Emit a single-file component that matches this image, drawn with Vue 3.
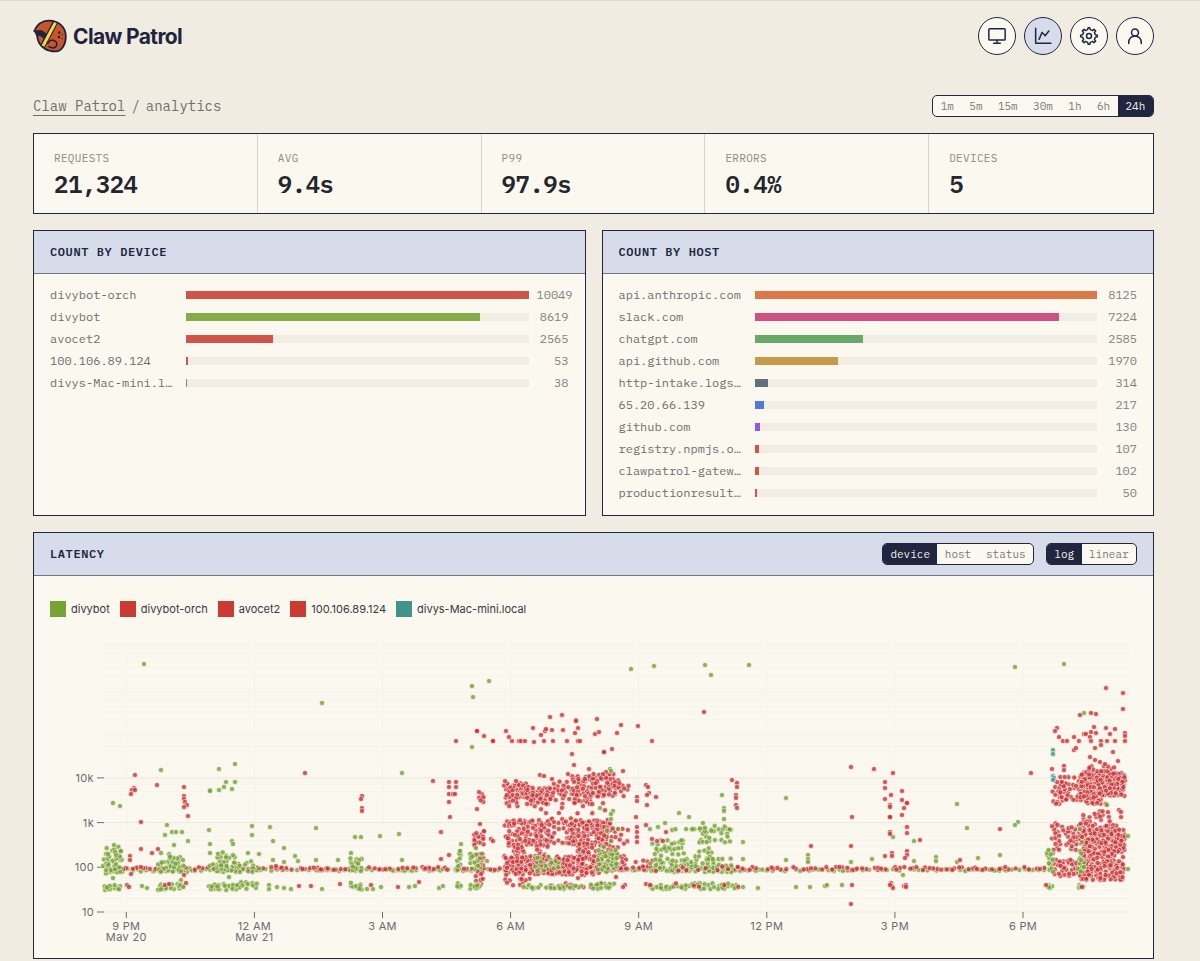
<template>
  <div class="page">
    <header class="topbar">
      <a href="#" class="brand">
        <svg class="logo" viewBox="0 0 34 34" aria-hidden="true">
          <path class="shell" d="M1.2 12C4 5.500 9 1.800 15.500 1.600 25.500 1.400 32.800 8 32.800 17.500 32.800 26 28.500 32 23 32.400 14 32.600 7 28 5 21 4 17 4 13.500 1.200 12Z" />
          <path class="claw" d="M0.800 12.300C6 9.500 12 11 14.500 16.500L12 21.500 10.800 20C9.500 18 7.500 16.500 5.500 17 4 15.500 3.500 13 0.800 12.300Z" />
          <path class="strap-edge" d="M22.800 2.500 9.500 27.500" />
          <path class="strap" d="M22.400 3.600 10 27" />
          <path class="curl" d="M14.500 25C16 21.800 18.500 20.800 21 21.600 24 22.600 24.500 25.500 23 27.500 21.500 29.300 18 28.800 15.500 27.500" />
          <circle cx="26.300" cy="13.500" r="1.200" />
          <circle cx="29.300" cy="15.500" r="0.700" />
          <circle cx="26" cy="18" r="1.300" />
          <circle cx="29.300" cy="19.500" r="0.700" />
        </svg>
        <span class="brand-name">Claw Patrol</span>
      </a>
      <nav class="nav">
        <button
          v-for="item in navItems"
          :key="item.label"
          type="button"
          class="nav-button"
          :class="{ active: item.active }"
          :aria-label="item.label"
        >
          <svg viewBox="0 0 24 24" aria-hidden="true">
            <path v-for="d in item.paths" :key="d" :d="d" />
          </svg>
        </button>
      </nav>
    </header>

    <div class="subbar">
      <div class="crumbs">
        <a href="#">Claw Patrol</a>
        <span>/</span>
        <span>analytics</span>
      </div>
      <div class="segmented ranges">
        <button
          v-for="r in ranges"
          :key="r"
          type="button"
          :class="{ active: r === range }"
          @click="range = r"
        >{{ r }}</button>
      </div>
    </div>

    <section class="stats">
      <div v-for="stat in stats" :key="stat.label" class="stat">
        <div class="stat-label">{{ stat.label }}</div>
        <div class="stat-value">{{ stat.value }}</div>
      </div>
    </section>

    <div class="counts">
      <section v-for="panel in countPanels" :key="panel.title" class="panel">
        <div class="panel-head"><h2>{{ panel.title }}</h2></div>
        <div class="rows">
          <div v-for="row in panel.rows" :key="row.name" class="row">
            <span class="row-name">{{ row.name }}</span>
            <div class="track">
              <div class="fill" :style="{ width: barWidth(row, panel), background: row.color }"></div>
            </div>
            <span class="row-value">{{ row.count }}</span>
          </div>
        </div>
      </section>
    </div>

    <section class="panel">
      <div class="panel-head">
        <h2>LATENCY</h2>
        <div class="controls">
          <div class="segmented group-by">
            <button
              v-for="g in groupings"
              :key="g"
              type="button"
              :class="{ active: g === grouping }"
              @click="grouping = g"
            >{{ g }}</button>
          </div>
          <div class="segmented scale">
            <button
              v-for="s in scales"
              :key="s"
              type="button"
              :class="{ active: s === scale }"
              @click="scale = s"
            >{{ s }}</button>
          </div>
        </div>
      </div>
      <div class="latency">
        <ul class="legend">
          <li v-for="entry in legend" :key="entry.name">
            <span class="swatch" :class="entry.tone"></span>{{ entry.name }}
          </li>
        </ul>
        <svg class="chart" viewBox="50 620 1087 321" role="img" aria-label="Latency by device">
          <g class="grid">
            <line v-for="y in minorLines" :key="y" x1="104" x2="1129" :y1="y" :y2="y" />
            <line v-for="t in xTicks" :key="t.x" :x1="t.x" :x2="t.x" y1="642" y2="912" />
            <line v-for="t in yTicks" :key="t.y" class="major" x1="104" x2="1129" :y1="t.y" :y2="t.y" />
          </g>
          <g class="y-axis">
            <g v-for="t in yTicks" :key="t.label">
              <line x1="97" x2="104" :y1="t.y" :y2="t.y" />
              <text x="94" :y="t.y + 4">{{ t.label }}</text>
            </g>
          </g>
          <g class="x-axis">
            <g v-for="t in xTicks" :key="t.label">
              <line :x1="t.x" :x2="t.x" y1="912" y2="918" />
              <text :x="t.x" y="930">{{ t.label }}</text>
              <text v-if="t.day" :x="t.x" y="941">{{ t.day }}</text>
            </g>
          </g>
          <g class="dots">
            <circle v-for="(p, i) in points" :key="i" :class="p.tone" :cx="p.x" :cy="p.y" r="2.6" />
          </g>
        </svg>
      </div>
    </section>
  </div>
</template>

<script setup>
import { ref } from "vue";

const ranges = ["1m", "5m", "15m", "30m", "1h", "6h", "24h"];
const range = ref("24h");
const groupings = ["device", "host", "status"];
const grouping = ref("device");
const scales = ["log", "linear"];
const scale = ref("log");

const navItems = [
  {
    label: "Devices",
    paths: [
      "M3.500 3.200h17a1.300 1.300 0 0 1 1.300 1.300v11a1.300 1.300 0 0 1-1.300 1.300h-17a1.300 1.300 0 0 1-1.300-1.300v-11a1.300 1.300 0 0 1 1.300-1.300Z",
      "M12 17v3.800",
      "M8 20.800h8",
    ],
  },
  {
    label: "Analytics",
    active: true,
    paths: ["M3.200 2.800V20.800H21.500", "M7.300 16 10.800 7.800 14.700 11.600 19 6"],
  },
  {
    label: "Settings",
    paths: [
      "M12 15a3 3 0 1 0 0-6 3 3 0 0 0 0 6Z",
      "M19.6224 10.3954L18.5247 7.7448L20 6L18 4L16.2647 5.48295L13.5578 4.36974L12.9353 2H10.981L10.3491 4.40113L7.70441 5.51596L6 4L4 6L5.45337 7.78885L4.3725 10.4463L2 11V13L4.40111 13.6555L5.51575 16.2997L4 18L6 20L7.79116 18.5403L10.397 19.6123L11 22H13L13.6045 19.6132L16.2551 18.5155L18 20L20 18L18.5159 16.2494L19.6139 13.598L22 12.9772V11Z",
    ],
  },
  {
    label: "Account",
    paths: [
      "M4.500 21v-1.500a7.500 7.500 0 0 1 15 0v1.500",
      "M12 12a4.200 4.200 0 1 0 0-8.400 4.200 4.200 0 0 0 0 8.400Z",
    ],
  },
];

const stats = [
  { label: "REQUESTS", value: "21,324" },
  { label: "AVG", value: "9.4s" },
  { label: "P99", value: "97.9s" },
  { label: "ERRORS", value: "0.4%" },
  { label: "DEVICES", value: "5" },
];

const countPanels = [
  {
    title: "COUNT BY DEVICE",
    rows: [
      { name: "divybot-orch", count: 10049, color: "#cf554b" },
      { name: "divybot", count: 8619, color: "#87ab4b" },
      { name: "avocet2", count: 2565, color: "#cf554b" },
      { name: "100.106.89.124", count: 53, color: "#cf554b" },
      { name: "divys-Mac-mini.local", count: 38, color: "#559a8a" },
    ],
  },
  {
    title: "COUNT BY HOST",
    rows: [
      { name: "api.anthropic.com", count: 8125, color: "#dc7748" },
      { name: "slack.com", count: 7224, color: "#cd5284" },
      { name: "chatgpt.com", count: 2585, color: "#68a968" },
      { name: "api.github.com", count: 1970, color: "#c69a4a" },
      { name: "http-intake.logs.datadoghq.com", count: 314, color: "#656e7b" },
      { name: "65.20.66.139", count: 217, color: "#5278e0" },
      { name: "github.com", count: 130, color: "#9656e0" },
      { name: "registry.npmjs.org", count: 107, color: "#cf554b" },
      { name: "clawpatrol-gateway.local", count: 102, color: "#cf554b" },
      { name: "productionresultssa.blob", count: 50, color: "#cd5270" },
    ],
  },
];

const barWidth = (row, panel) => `${(row.count / panel.rows[0].count) * 100}%`;

const legend = [
  { name: "divybot", tone: "green" },
  { name: "divybot-orch", tone: "red" },
  { name: "avocet2", tone: "red" },
  { name: "100.106.89.124", tone: "red" },
  { name: "divys-Mac-mini.local", tone: "teal" },
];

// Axes
const DECADE = 44.7;
const yAt = (ms) => 912 - (Math.log10(ms) - 1) * DECADE;

const yTicks = [
  { label: "10", y: yAt(10) },
  { label: "100", y: yAt(100) },
  { label: "1k", y: yAt(1000) },
  { label: "10k", y: yAt(10000) },
];

const minorLines = [];
for (let e = 1; e < 7; e++) {
  for (let k = 1; k < 10; k++) {
    minorLines.push(yAt(k * 10 ** e));
  }
}
minorLines.push(yAt(10 ** 7));

const xTicks = ["9 PM", "12 AM", "3 AM", "6 AM", "9 AM", "12 PM", "3 PM", "6 PM"].map((label, i) => ({
  label,
  x: 126.3 + i * 128.1,
  day: ["May 20", "May 21"][i],
}));

// Small seeded generator so that the dense bands are stable between renders
let seed = 20;
const random = () => {
  seed = (seed * 1664525 + 1013904223) % 4294967296;
  return seed / 4294967296;
};

// tone, x from, x to, y from, y to, count
const bands = [
  ["green", 104, 190, 868, 872, 28],
  ["red", 104, 190, 867, 869, 16],
  ["green", 190, 1050, 869, 871, 190],
  ["red", 190, 1050, 867, 870, 200],
  ["green", 103, 122, 857, 874, 26],
  ["green", 104, 121, 846, 858, 12],
  ["green", 103, 121, 885, 890, 13],
  ["green", 158, 184, 860, 872, 26],
  ["green", 169, 184, 854, 864, 12],
  ["green", 158, 184, 884, 890, 18],
  ["green", 208, 240, 863, 872, 24],
  ["green", 217, 236, 852, 866, 15],
  ["green", 208, 240, 884, 890, 24],
  ["green", 243, 260, 861, 872, 10],
  ["green", 241, 260, 882, 890, 9],
  ["green", 350, 362, 856, 872, 16],
  ["green", 350, 362, 882, 890, 9],
  ["green", 457, 461, 850, 871, 8],
  ["green", 457, 461, 882, 888, 4],
  ["red", 474, 484, 831, 846, 16],
  ["red", 475, 484, 853, 886, 22],
  ["red", 478, 484, 794, 802, 6],
  ["green", 470, 482, 853, 871, 16],
  ["green", 470, 481, 884, 889, 9],
  ["red", 504, 526, 783, 798, 40],
  ["red", 504, 518, 795, 808, 9],
  ["red", 526, 550, 787, 804, 44],
  ["red", 550, 572, 781, 800, 24],
  ["red", 571, 591, 776, 804, 44],
  ["red", 591, 616, 774, 797, 46],
  ["red", 614, 629, 780, 797, 12],
  ["red", 528, 605, 803, 814, 14],
  ["red", 504, 551, 820, 846, 88],
  ["red", 550, 571, 818, 843, 20],
  ["red", 569, 612, 820, 846, 98],
  ["red", 612, 628, 827, 860, 18],
  ["red", 511, 524, 844, 860, 18],
  ["red", 536, 550, 845, 860, 9],
  ["red", 576, 590, 843, 860, 18],
  ["red", 590, 614, 843, 860, 16],
  ["red", 504, 601, 856, 875, 180],
  ["red", 600, 628, 862, 871, 14],
  ["red", 504, 530, 878, 886, 10],
  ["red", 550, 602, 883, 888, 10],
  ["green", 535, 560, 856, 872, 16],
  ["green", 597, 617, 850, 872, 34],
  ["green", 521, 582, 885, 889, 24],
  ["green", 590, 615, 883, 889, 13],
  ["red", 634, 656, 860, 872, 10],
  ["green", 650, 732, 867, 872, 46],
  ["green", 650, 732, 858, 868, 46],
  ["green", 652, 684, 839, 856, 26],
  ["green", 695, 713, 848, 860, 10],
  ["green", 670, 732, 829, 830, 16],
  ["green", 699, 731, 825, 843, 24],
  ["green", 649, 690, 885, 889, 22],
  ["green", 690, 738, 883, 889, 24],
  ["red", 651, 740, 866, 871, 10],
  ["red", 666, 740, 882, 887, 5],
  ["red", 1052, 1066, 781, 804, 20],
  ["red", 1060, 1080, 776, 800, 26],
  ["red", 1080, 1125, 772, 796, 126],
  ["red", 1088, 1115, 766, 774, 14],
  ["red", 1080, 1106, 792, 805, 26],
  ["red", 1094, 1110, 811, 821, 10],
  ["red", 1080, 1090, 815, 823, 5],
  ["red", 1052, 1080, 823, 850, 40],
  ["red", 1080, 1117, 821, 830, 20],
  ["red", 1080, 1125, 829, 852, 112],
  ["red", 1083, 1115, 850, 862, 30],
  ["red", 1053, 1080, 859, 876, 36],
  ["red", 1080, 1125, 861, 880, 86],
  ["green", 1047, 1053, 850, 872, 14],
  ["green", 1048, 1053, 885, 889, 5],
  ["green", 1078, 1084, 851, 872, 12],
  ["green", 1078, 1084, 884, 889, 4],
];

// Isolated requests, as "x,y" pairs
const singles = {
  green: `144,664 322,703 161,770 219,769 235,764 226,782 235,782 210,790 210,791 219,790 224,787 232,789
    113,803 120,806 167,825 172,832 176,832 182,832 165,835 188,841 209,830 252,826 252,835 270,827
    273,841 316,828 284,848 232,841 233,844 210,844 174,845 355,837 361,837 380,836 399,834 402,773
    402,860 210,853 248,853 259,854 161,853 114,845 121,851 273,860 284,862 295,856 298,861 316,860
    338,860 351,853 113,878 229,877 181,880 142,886 147,888 269,885 269,889 277,887 284,888 291,889
    322,889 367,889 373,889 381,887 409,887 415,886 631,669 654,666 472,686 489,681 473,697 472,747
    610,769 611,771 600,808 613,811 611,814 611,819 618,829 461,844 460,851 476,848 607,831 611,841
    604,847 487,861 439,888 443,886 705,665 711,675 749,665 722,795 724,808 724,811 724,819 679,813
    689,817 665,823 650,829 658,827 703,823 786,798 743,842 743,859 786,860 808,855 808,859 808,862
    758,888 796,887 810,887 743,887 825,886 827,885 842,885 851,862 872,859 893,837 914,841 914,861
    903,875 1015,667 1064,664 1084,713 957,804 967,828 1018,822 1015,825 936,857 936,861 978,858
    1000,855 1128,836 1107,805 1128,869 957,862 1080,829 1082,842`,
  red: `135,775 157,785 184,787 134,788 132,790 135,790 131,794 184,796 184,799 185,802 187,805 184,807
    188,816 141,822 141,849 158,849 152,853 130,856 130,860 131,874 127,885 129,887 165,885 169,884
    186,883 184,875 305,773 362,796 361,799 362,808 362,811 299,886 311,886 340,884 371,885 398,887
    419,882 276,866 433,781 456,741 477,731 477,731 484,736 493,741 493,741 506,731 509,737 512,741
    519,741 521,741 525,741 533,728 534,742 541,735 544,741 545,731 546,729 552,730 550,717 553,741
    562,715 563,730 567,741 576,720 576,721 578,728 575,733 578,741 580,741 597,719 595,734 599,732
    621,725 617,733 638,726 652,741 612,749 604,752 604,752 572,754 574,765 589,769 623,771 606,772
    603,774 568,774 540,775 544,776 552,779 516,781 505,781 449,782 456,782 449,787 456,787 449,794
    453,794 455,794 449,802 450,817 441,832 449,855 441,859 479,792 477,809 480,824 484,831 491,839
    493,841 636,817 646,825 647,805 656,797 646,785 648,787 649,793 647,795 637,797 637,801 637,827
    637,832 637,837 637,842 652,839 657,841 666,832 663,841 625,885 623,887 646,884 650,885 616,877
    578,878 704,712 732,780 737,783 737,787 736,795 736,798 736,805 737,808 811,846 851,767 874,769
    893,773 885,782 885,788 885,799 891,795 890,805 890,807 890,817 890,817 890,832 890,834 902,791
    902,800 907,803 907,803 904,808 902,815 907,827 907,833 852,817 851,846 852,885 851,904 885,856
    892,853 892,856 907,851 907,855 905,858 920,840 891,883 892,886 893,888 890,885 904,886 906,885
    906,887 1106,688 1123,693 1123,709 1080,715 1091,713 1096,714 1057,728 1055,731 1059,737 1063,741
    1067,741 1074,737 1074,750 1076,748 1079,741 1084,734 1086,734 1091,732 1096,733 1094,727 1090,737
    1091,741 1106,728 1101,741 1101,745 1095,748 1107,741 1110,734 1115,729 1115,741 1125,733 1125,736
    1125,741 1113,752 1090,757 1095,760 1118,761 1100,762 1105,764 1031,773 1052,769 1064,766 1064,770
    1000,829 960,860 1123,857 1046,885 1082,887 1119,810 1121,812 1121,817`,
  teal: "1053,750 1053,754 1053,776 1054,778 1053,780",
};

// Pick the roomiest of a few candidates, so a band fills evenly instead of clumping
const scatter = ([tone, x0, x1, y0, y1, count]) => {
  const placed = [];
  for (let i = 0; i < count; i++) {
    let best = null;
    let bestGap = -1;
    for (let c = 0; c < 3; c++) {
      const p = { tone, x: x0 + random() * (x1 - x0), y: y0 + random() * (y1 - y0) };
      const gap = Math.min(99, ...placed.map((q) => Math.hypot(q.x - p.x, q.y - p.y)));
      if (gap > bestGap) {
        best = p;
        bestGap = gap;
      }
    }
    placed.push(best);
  }
  return placed;
};

const points = bands.flatMap(scatter);
for (const [tone, list] of Object.entries(singles)) {
  for (const pair of list.split(/\s+/)) {
    const [x, y] = pair.split(",").map(Number);
    points.push({ tone, x, y });
  }
}
</script>

<style>
body {
  margin: 0;
  background: #f0ece1;
}
</style>

<style scoped>
.page {
  padding: 16px 46px 2px 33px;
  border-top: 1px solid #dfdcd1;
  font-family: "IBM Plex Mono", "Liberation Mono", monospace;
  color: #20263f;
}

button {
  font: inherit;
  color: inherit;
  cursor: pointer;
}

.topbar {
  display: flex;
  align-items: center;
  justify-content: space-between;
  margin-bottom: 40px;
}

.brand {
  display: flex;
  align-items: center;
  gap: 6px;
  color: #1e2440;
  text-decoration: none;
}

.brand-name {
  padding-top: 2px;
  font-family: Inter, sans-serif;
  font-size: 21px;
  font-weight: 700;
  line-height: 28px;
  letter-spacing: -0.03em;
}

.logo {
  width: 34px;
  height: 34px;
  fill: #1e2440;
}

.shell {
  fill: #c9562b;
  stroke: #1e2440;
  stroke-width: 1.8;
  stroke-linejoin: round;
}

.strap-edge {
  stroke: #1e2440;
  stroke-width: 5.4;
}

.strap {
  stroke: #f3d94a;
  stroke-width: 3;
}

.curl {
  fill: none;
  stroke: #1e2440;
  stroke-width: 1.6;
}

.nav {
  display: flex;
  gap: 8px;
}

.nav-button {
  display: flex;
  align-items: center;
  justify-content: center;
  width: 38px;
  height: 38px;
  padding: 0;
  border: 1px solid #20263f;
  border-radius: 50%;
  background: #fbf8f0;
}

.nav-button.active {
  background: #d6dce9;
}

.nav-button svg {
  width: 20px;
  height: 20px;
  fill: none;
  stroke: #20263f;
  stroke-width: 1.8;
  stroke-linecap: round;
  stroke-linejoin: round;
}

.subbar {
  display: flex;
  align-items: center;
  justify-content: space-between;
  margin-bottom: 16px;
}

.crumbs {
  display: flex;
  gap: 6px;
  font-size: 14px;
  line-height: 22px;
  color: #6f6e6c;
}

.crumbs a {
  color: inherit;
  text-underline-offset: 4px;
}

.segmented {
  display: flex;
  box-sizing: border-box;
  height: 22px;
  overflow: hidden;
  border: 1px solid #20263f;
  border-radius: 5px;
  background: #fbf8f0;
  font-size: 11px;
  color: #7b7a78;
}

.segmented button {
  flex: 1 1 auto;
  padding: 0 7px;
  border: 0;
  background: none;
}

.segmented button.active {
  background: #20263f;
  color: #f3f0e8;
}

.ranges {
  min-width: 222px;
}

.group-by {
  min-width: 152px;
}

.scale {
  min-width: 91px;
}

.stats {
  display: grid;
  grid-template-columns: repeat(5, 1fr);
  margin-bottom: 16px;
  border: 1px solid #20263f;
  background: #fbf8f0;
}

.stat {
  padding: 15px 20px 14px;
  border-right: 1px solid #d9d4c4;
}

.stat:last-child {
  border-right: 0;
}

.stat-label {
  margin-bottom: 2px;
  font-size: 11px;
  line-height: 18px;
  letter-spacing: 0.03em;
  color: #8d8b87;
}

.stat-value {
  font-size: 24px;
  font-weight: 600;
  line-height: 30px;
  letter-spacing: -0.02em;
  color: #25262c;
}

.counts {
  display: grid;
  grid-template-columns: 1fr 1fr;
  gap: 16px;
  margin-bottom: 16px;
}

.panel {
  min-width: 0;
  border: 1px solid #20263f;
  background: #fbf8f0;
}

.panel-head {
  display: flex;
  align-items: center;
  justify-content: space-between;
  height: 42px;
  padding: 0 16px;
  border-bottom: 1px solid #6f7689;
  background: #d6dce9;
}

.panel-head h2 {
  margin: 0;
  font-size: 12px;
  font-weight: 600;
  line-height: 18px;
  letter-spacing: 0.05em;
}

.controls {
  display: flex;
  gap: 12px;
}

.rows {
  padding: 10px 16px 11px;
}

.row {
  display: grid;
  grid-template-columns: 128px 1fr 32px;
  align-items: center;
  gap: 8px;
  font-size: 12px;
  line-height: 22px;
  color: #6f6e6c;
}

.row-name {
  overflow: hidden;
  text-overflow: ellipsis;
  white-space: nowrap;
}

.track {
  height: 8px;
  background: #f1ede3;
}

.fill {
  height: 100%;
}

.row-value {
  text-align: right;
  color: #83817e;
}

.latency {
  padding: 25px 16px 17px;
}

.legend {
  display: flex;
  gap: 10px;
  margin: 0 0 3px;
  padding: 0;
  list-style: none;
  font-family: Inter, sans-serif;
  font-size: 11px;
  line-height: 16px;
  color: #38393f;
}

.legend li {
  display: flex;
  gap: 5px;
}

.swatch {
  width: 16px;
  height: 16px;
}

.swatch.green {
  background: #76a334;
}

.swatch.red {
  background: #cb3a33;
}

.swatch.teal {
  background: #419488;
}

.chart {
  display: block;
  width: 100%;
  overflow: hidden;
  font-family: Inter, sans-serif;
  font-size: 11px;
  letter-spacing: 0.03em;
}

.chart text {
  fill: #6b6b6d;
}

.y-axis text {
  text-anchor: end;
}

.x-axis text {
  text-anchor: middle;
}

.y-axis line,
.x-axis line {
  stroke: #6b6b6d;
}

.grid line {
  stroke: #25262c;
  stroke-opacity: 0.02;
}

.grid .major {
  stroke-opacity: 0.06;
}

.dots circle {
  stroke: #fbf8f0;
  stroke-width: 0.7;
  opacity: 0.8;
}

.dots .green {
  fill: #73a12f;
}

.dots .red {
  fill: #c93236;
}

.dots .teal {
  fill: #419488;
}
</style>
